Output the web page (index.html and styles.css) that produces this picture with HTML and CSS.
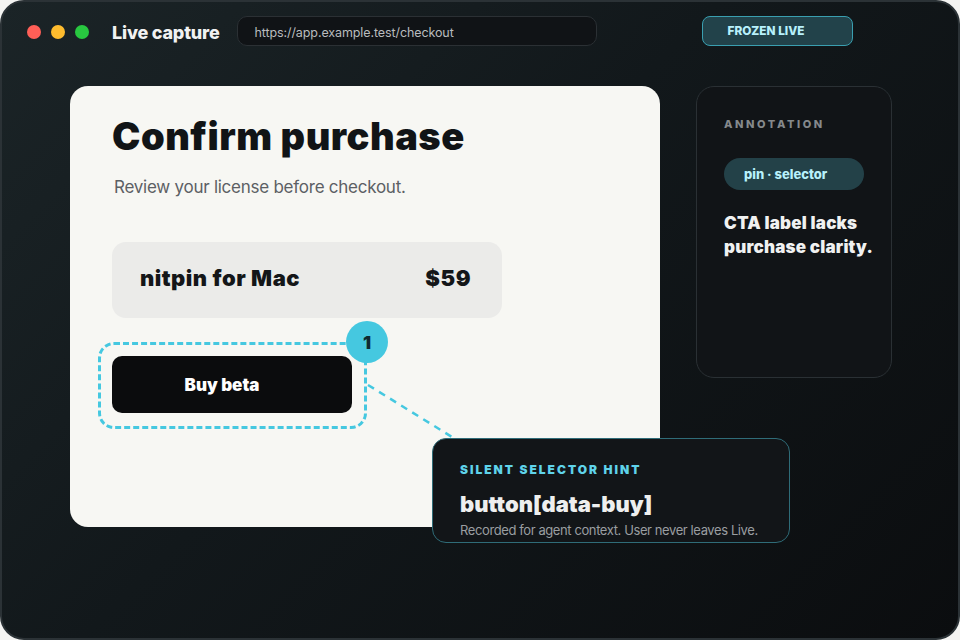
FILE: index.html
```html
<!DOCTYPE html>
<html lang="en">
<head>
<meta charset="utf-8">
<title>Live capture</title>
<link rel="stylesheet" href="styles.css">
</head>
<body>
<div class="frame">
  <header class="topbar">
    <div class="dots">
      <span class="dot red"></span>
      <span class="dot yellow"></span>
      <span class="dot green"></span>
    </div>
    <div class="app-title">Live capture</div>
    <div class="url">https://app.example.test/checkout</div>
    <div class="frozen">FROZEN LIVE</div>
  </header>

  <main class="stage">
    <section class="card">
      <h1 class="title">Confirm purchase</h1>
      <p class="subtitle">Review your license before checkout.</p>
      <div class="product">
        <span class="product-name">nitpin for Mac</span>
        <span class="product-price">$59</span>
      </div>
      <div class="target">
        <button class="buy">Buy beta</button>
        <span class="pin">1</span>
      </div>
    </section>

    <aside class="annotation">
      <div class="ann-label">ANNOTATION</div>
      <div class="ann-pill">pin · selector</div>
      <p class="ann-text">CTA label lacks purchase clarity.</p>
    </aside>
  </main>

  <svg class="connector" width="100" height="70" viewBox="0 0 100 70">
    <path d="M2 2 L86 54" stroke="#45c8e0" stroke-width="2.5" stroke-dasharray="7 6" fill="none"/>
  </svg>

  <div class="hint">
    <div class="hint-label">SILENT SELECTOR HINT</div>
    <div class="hint-selector">button[data-buy]</div>
    <div class="hint-desc">Recorded for agent context. User never leaves Live.</div>
  </div>
</div>
</body>
</html>
```

FILE: styles.css
```css
* { box-sizing: border-box; }
html, body { margin: 0; padding: 0; background: #f4f4f2; }
body { font-family: Inter, "Noto Sans", sans-serif; }

.frame {
  position: relative;
  width: 960px;
  height: 640px;
  border: 2px solid #2b3236;
  border-radius: 24px;
  background: linear-gradient(135deg, #1b2427 0%, #12181b 45%, #0b0d0f 100%);
  overflow: hidden;
}

.topbar {
  display: flex;
  align-items: center;
  height: 30px;
  margin-top: 14px;
  padding-left: 25px;
}
.dots { display: flex; gap: 10px; margin-top: 2px; }
.dot { width: 14px; height: 14px; border-radius: 50%; display: block; }
.red { background: #ff5f57; }
.yellow { background: #febc2e; }
.green { background: #28c840; }

.app-title {
  margin-left: 23px;
  margin-top: 3px;
  color: #f1f2f2;
  font-size: 18px;
  font-weight: 800;
  letter-spacing: -0.2px;
}
.url {
  margin-left: 17px;
  width: 360px;
  height: 30px;
  border: 1px solid #2b3034;
  border-radius: 10px;
  background: #101316;
  color: #b9bcbe;
  font-size: 12.5px;
  line-height: 31px;
  padding-left: 17px;
  letter-spacing: -0.1px;
}
.frozen {
  margin-left: 105px;
  width: 151px;
  height: 30px;
  border: 1.5px solid #3a9fb0;
  border-radius: 8px;
  background: #22424a;
  color: #b8f1fc;
  font-size: 11.8px;
  font-weight: 800;
  line-height: 29px;
  padding-left: 25px;
}

.stage {
  display: flex;
  align-items: flex-start;
  gap: 36px;
  margin-top: 40px;
  padding-left: 68px;
}

.card {
  width: 590px;
  height: 441px;
  border-radius: 18px;
  background: #f7f7f3;
  padding: 27px 42px 0 42px;
}
.title {
  margin: 0;
  font-size: 38px;
  line-height: 46px;
  font-weight: 900;
  color: #111416;
  letter-spacing: 0.5px;
}
.subtitle {
  margin: 16px 0 0 2px;
  font-size: 17px;
  line-height: 24px;
  color: #5c6064;
  letter-spacing: -0.25px;
}
.product {
  margin-top: 43px;
  width: 390px;
  height: 76px;
  border-radius: 14px;
  background: #ebebe9;
  display: flex;
  align-items: center;
  justify-content: space-between;
  padding: 0 31px 4px 28px;
}
.product-name, .product-price {
  font-size: 22px;
  font-weight: 900;
  color: #141618;
  letter-spacing: 0.5px;
}

.target {
  position: relative;
  margin: 24px 0 0 -14px;
  width: 269px;
  height: 87px;
  border: 3px dashed #45c8e0;
  border-radius: 16px;
  padding: 11px;
}
.buy {
  display: block;
  width: 240px;
  height: 57px;
  border: 0;
  border-radius: 10px;
  background: #0b0c0d;
  color: #ffffff;
  font-family: Inter, "Noto Sans", sans-serif;
  font-size: 17px;
  font-weight: 900;
  padding: 0 20px 0 0;
  cursor: pointer;
}
.pin {
  position: absolute;
  left: 245px;
  top: -24px;
  width: 42px;
  height: 42px;
  border-radius: 50%;
  background: #45c8e0;
  color: #0f2a31;
  font-size: 18px;
  font-weight: 900;
  display: flex;
  align-items: center;
  justify-content: center;
}

.annotation {
  width: 196px;
  height: 292px;
  border: 1.5px solid #2a3034;
  border-radius: 18px;
  background: #111417;
  padding: 30px 0 0 27px;
}
.ann-label {
  font-size: 11px;
  line-height: 14px;
  font-weight: 800;
  letter-spacing: 2.6px;
  color: #85898c;
}
.ann-pill {
  margin-top: 27px;
  width: 140px;
  height: 32px;
  border-radius: 16px;
  background: #234148;
  color: #b8f1fc;
  font-size: 13px;
  font-weight: 800;
  line-height: 33px;
  padding-left: 20px;
}
.ann-text {
  margin: 21px 0 0 0;
  font-size: 17px;
  line-height: 24px;
  font-weight: 900;
  color: #f0f1f1;
  letter-spacing: 0.2px;
}

.connector {
  position: absolute;
  left: 364px;
  top: 381px;
}

.hint {
  position: absolute;
  left: 430px;
  top: 436px;
  width: 358px;
  height: 105px;
  border: 1.5px solid #2f6c78;
  border-radius: 14px;
  background: #121518;
  padding: 23px 0 0 27px;
}
.hint-label {
  font-size: 12px;
  line-height: 16px;
  font-weight: 900;
  letter-spacing: 2px;
  color: #5fd3ea;
}
.hint-selector {
  margin-top: 12px;
  font-size: 22px;
  line-height: 28px;
  font-weight: 900;
  color: #eeefef;
}
.hint-desc {
  margin-top: 3px;
  font-size: 13px;
  line-height: 18px;
  color: #9a9ea1;
  letter-spacing: -0.4px;
}
```
